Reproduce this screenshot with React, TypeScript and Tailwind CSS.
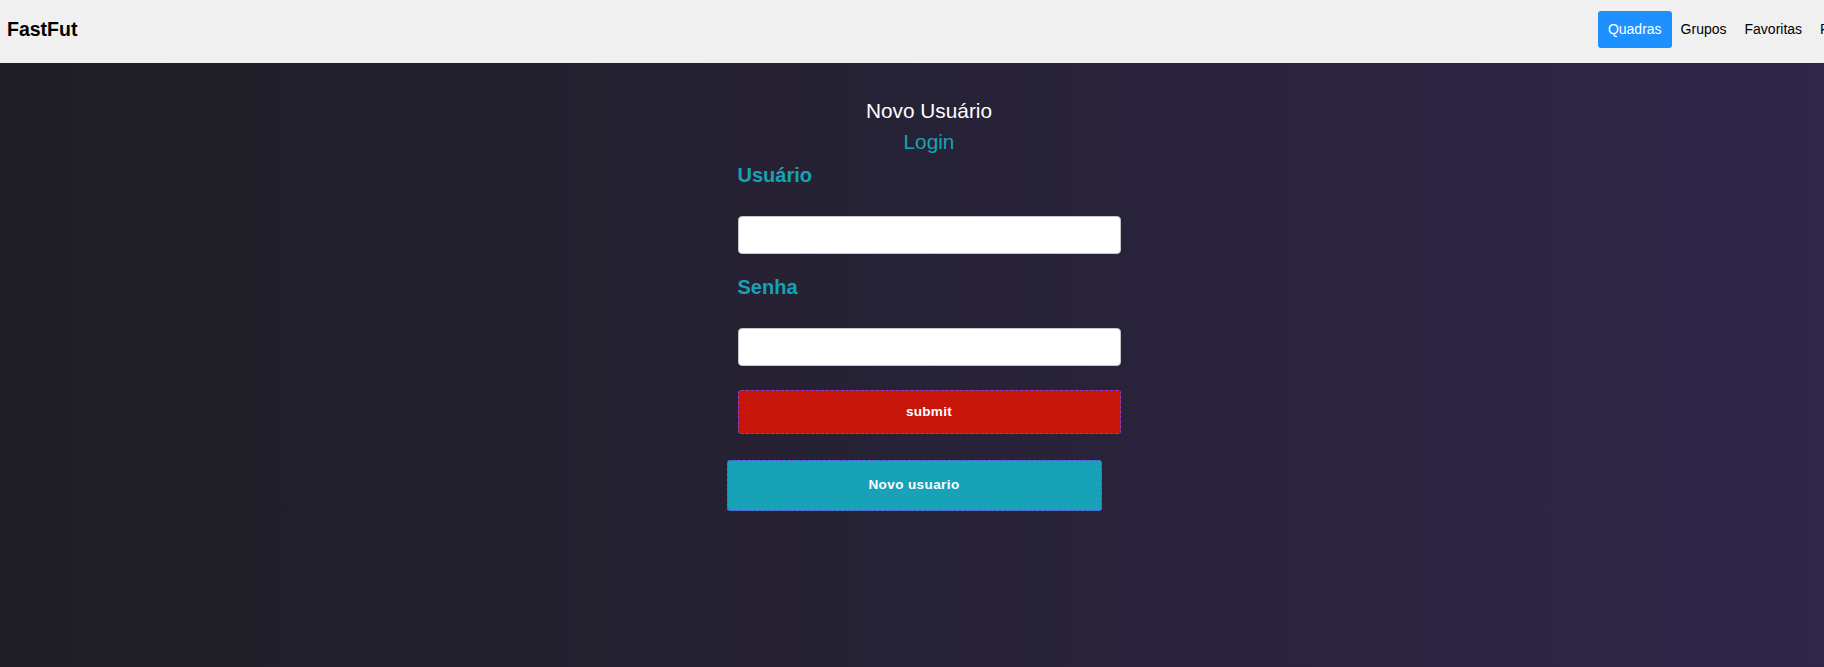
import React from "react";

const links = ["Quadras", "Grupos", "Favoritas", "Perfil"];

const Header = () => {
  return (
    <header className="flex h-[63px] items-center justify-between bg-[#f0f0f0] pb-[4px] pl-[7px]">
      <span className="text-[19.5px] font-bold text-black">FastFut</span>
      <nav className="flex items-center">
        {links.map((link, i) => (
          <a
            key={link}
            href="#"
            className={
              i === 0
                ? "flex h-[37px] items-center rounded-[3px] bg-[#1e90ff] px-[10px] text-[14px] text-white"
                : "flex h-[37px] items-center px-[9px] text-[14px] text-black"
            }
          >
            {link}
          </a>
        ))}
      </nav>
    </header>
  );
};

const Field = ({ label, type }: { label: string; type: string }) => (
  <div className="flex flex-col">
    <h3 className="text-[20px] leading-[22px] font-bold text-[#17a2b8]">{label}</h3>
    <input
      type={type}
      className="mt-[30px] h-[38px] w-full rounded-[4px] border border-[#c4c4c4] bg-white px-2 text-[14px] outline-none"
    />
  </div>
);

export default function App() {
  return (
    <div
      className="h-[667px] w-full overflow-hidden"
      style={{ fontFamily: '"Liberation Sans", Arial, sans-serif' }}
    >
      <div className="w-[1861px]">
        <Header />
        <main className="flex h-[604px] flex-col items-center bg-gradient-to-r from-[#1f1e24] to-[#2f2649] pt-[36px] pr-[3px]">
          <h2 className="text-[20.8px] leading-[24px] text-white">Novo Usuário</h2>
          <a href="#" className="mt-[7px] text-[20.8px] leading-[24px] text-[#17a2b8]">
            Login
          </a>
          <form className="mt-[10px] flex w-[383px] flex-col" onSubmit={(e) => e.preventDefault()}>
            <Field label="Usuário" type="text" />
            <div className="mt-[22px]">
              <Field label="Senha" type="password" />
            </div>
            <button
              type="submit"
              className="mt-[24px] h-[44px] w-full rounded-[3px] border border-dashed border-[#7048e8] bg-[#c8150a] text-[13.5px] font-bold tracking-[0.3px] text-white"
            >
              submit
            </button>
          </form>
          <div className="mt-[26px] w-[383px]">
            <button className="ml-[-11px] h-[51px] w-[375px] rounded-[3px] border border-dashed border-[#7048e8] bg-[#18a2b8] text-[13.5px] font-bold tracking-[0.4px] text-white">
              Novo usuario
            </button>
          </div>
        </main>
      </div>
    </div>
  );
}
